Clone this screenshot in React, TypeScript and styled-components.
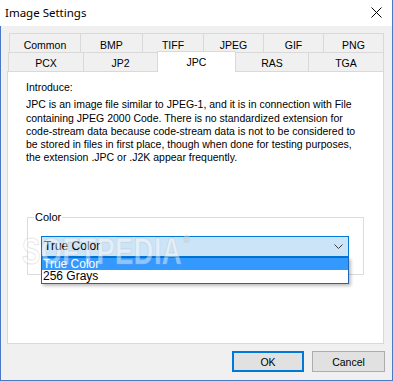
import styled, { createGlobalStyle } from "styled-components";

const GlobalStyle = createGlobalStyle`
  html, body {
    margin: 0;
    padding: 0;
    background: #ffffff;
  }
  * {
    box-sizing: border-box;
  }
`;

const ACCENT = "#4a78c4";

const topTabs = [
  { label: "Common", width: 72 },
  { label: "BMP", width: 63 },
  { label: "TIFF", width: 62 },
  { label: "JPEG", width: 61 },
  { label: "GIF", width: 61 },
  { label: "PNG", width: 61 },
];

const bottomTabs = [
  { label: "PCX", width: 76 },
  { label: "JP2", width: 75 },
  { label: "JPC", width: 79, active: true },
  { label: "RAS", width: 74 },
  { label: "TGA", width: 76 },
];

const introLines = [
  "JPC is an image file similar to JPEG-1, and it is in connection with File",
  "containing JPEG 2000 Code. There is no standardized extension for",
  "code-stream data because code-stream data is not to be considered to",
  "be stored in files in first place, though when done for testing purposes,",
  "the extension .JPC or .J2K appear frequently.",
];

const App = () => {
  return (
    <>
      <GlobalStyle />
      <Window>
        <TitleBar>
          <Title>Image Settings</Title>
          <CloseButton aria-label="Close">
            <svg width="11" height="11" viewBox="0 0 11 11" aria-hidden={true}>
              <path d="M0.5 0.5 L10.5 10.5 M10.5 0.5 L0.5 10.5" stroke="#000" strokeWidth="1" fill="none" />
            </svg>
          </CloseButton>
        </TitleBar>

        <Client>
          <TabStrip>
            <TabRow $offset={1}>
              {topTabs.map((t) => (
                <Tab key={t.label} $width={t.width} $padTop={5}>
                  {t.label}
                </Tab>
              ))}
            </TabRow>
            <TabRow $offset={0}>
              {bottomTabs.map((t) => (
                <Tab key={t.label} $width={t.width} $padTop={4} $active={t.active}>
                  {t.label}
                </Tab>
              ))}
            </TabRow>
          </TabStrip>

          <Panel>
            <IntroLabel>Introduce:</IntroLabel>
            <Description>
              {introLines.map((line) => (
                <Line key={line}>{line}</Line>
              ))}
            </Description>

            <GroupBox>
              <Legend>Color</Legend>
              <Combo>
                <ComboText>True Color</ComboText>
                <svg width="9" height="5" viewBox="0 0 9 5" aria-hidden={true}>
                  <path d="M0.5 0.5 L4.5 4.5 L8.5 0.5" stroke="#3c3c3c" strokeWidth="1" fill="none" />
                </svg>
                <DropList>
                  <Option $selected>True Color</Option>
                  <Option>256 Grays</Option>
                </DropList>
              </Combo>
            </GroupBox>

            <Watermark aria-hidden={true}>
              SOFTPEDIA<sup>®</sup>
            </Watermark>
          </Panel>

          <ButtonRow>
            <DialogButton $default>OK</DialogButton>
            <DialogButton>Cancel</DialogButton>
          </ButtonRow>
        </Client>
      </Window>
    </>
  );
};

export default App;

const Window = styled.div`
  width: 393px;
  height: 381px;
  display: flex;
  flex-direction: column;
  border-right: 1px solid ${ACCENT};
  border-bottom: 1px solid ${ACCENT};
  font-family: "Liberation Sans", Arial, sans-serif;
  color: #000;
`;

const TitleBar = styled.div`
  height: 26px;
  flex: none;
  display: flex;
  align-items: center;
  justify-content: space-between;
  padding: 0 10px 1px 5px;
  background: #ffffff;
`;

const Title = styled.span`
  font-family: "Noto Sans", "Open Sans", sans-serif;
  font-size: 11.5px;
  color: #000;
`;

const CloseButton = styled.div`
  display: inline-flex;
  width: 11px;
  height: 11px;
`;

const Client = styled.div`
  flex: 1;
  display: flex;
  flex-direction: column;
  padding-top: 7px;
  background: #f0f0f0;
  border-left: 1px solid ${ACCENT};
`;

const TabStrip = styled.div`
  margin-left: 7px;
  display: flex;
  flex-direction: column;
`;

const TabRow = styled.div<{ $offset: number }>`
  display: flex;
  height: 19px;
  margin-left: ${(p) => p.$offset}px;
`;

const Tab = styled.div<{ $width: number; $padTop: number; $active?: boolean }>`
  width: ${(p) => p.$width}px;
  height: ${(p) => (p.$active ? 21 : 19)}px;
  margin-top: ${(p) => (p.$active ? -1 : 0)}px;
  padding-top: ${(p) => p.$padTop}px;
  flex: none;
  border: 1px solid #d9d9d9;
  border-bottom: none;
  background: ${(p) => (p.$active ? "#ffffff" : "#f0f0f0")};
  position: ${(p) => (p.$active ? "relative" : "static")};
  z-index: ${(p) => (p.$active ? 2 : "auto")};
  font-size: 10.5px;
  line-height: 12px;
  text-align: center;

  & + & {
    margin-left: -1px;
  }
`;

const Panel = styled.div`
  position: relative;
  margin-left: 6px;
  width: 377px;
  height: 273px;
  flex: none;
  display: flex;
  flex-direction: column;
  padding: 9px 0 0 18px;
  background: #ffffff;
  border: 1px solid #d9d9d9;
`;

const IntroLabel = styled.div`
  font-size: 10.5px;
  line-height: 13.3px;
`;

const Description = styled.div`
  margin-top: 4px;
  font-size: 10.5px;
  line-height: 13.3px;
`;

const Line = styled.div`
  white-space: nowrap;
`;

const GroupBox = styled.div`
  position: relative;
  margin: 52px 0 0 1px;
  width: 337px;
  height: 58px;
  padding: 18px 13px 0;
  border: 1px solid #dcdcdc;
`;

const Legend = styled.span`
  position: absolute;
  top: -7px;
  left: 6px;
  padding: 0 1px;
  background: #ffffff;
  font-size: 11px;
  line-height: 13px;
`;

const Combo = styled.div`
  position: relative;
  width: 308px;
  height: 21px;
  display: flex;
  align-items: center;
  justify-content: space-between;
  padding: 0 5px 0 2px;
  background: #cce4f7;
  border: 1px solid #0078d7;
`;

const ComboText = styled.span`
  font-size: 12px;
  line-height: 14px;
`;

const DropList = styled.div`
  position: absolute;
  top: 20px;
  left: -1px;
  width: 308px;
  z-index: 3;
  display: flex;
  flex-direction: column;
  background: #ffffff;
  border: 1px solid #1e64b4;
  box-shadow: 2px 2px 3px rgba(0, 0, 0, 0.25);
`;

const Option = styled.div<{ $selected?: boolean }>`
  height: 12.5px;
  padding-left: 1px;
  font-size: 12px;
  line-height: 13px;
  color: ${(p) => (p.$selected ? "#ffffff" : "#000000")};
  background: ${(p) => (p.$selected ? "#3399ff" : "transparent")};
`;

const Watermark = styled.div`
  position: absolute;
  left: 14px;
  top: 160px;
  z-index: 5;
  transform: scaleX(0.74);
  transform-origin: left top;
  font-family: "Liberation Sans", Arial, sans-serif;
  font-weight: 700;
  font-size: 37px;
  line-height: 40px;
  letter-spacing: 0.5px;
  color: rgba(255, 255, 255, 0.45);
  -webkit-text-stroke: 1px rgba(170, 170, 170, 0.3);
  pointer-events: none;

  sup {
    font-size: 11px;
    vertical-align: top;
    line-height: 14px;
    margin-left: 2px;
  }
`;

const ButtonRow = styled.div`
  display: flex;
  justify-content: flex-end;
  gap: 8px;
  margin-top: 7px;
  padding-right: 7px;
`;

const DialogButton = styled.div<{ $default?: boolean }>`
  width: ${(p) => (p.$default ? 72 : 73)}px;
  height: 21px;
  display: flex;
  align-items: center;
  justify-content: center;
  background: #e1e1e1;
  border: ${(p) => (p.$default ? "2px solid #0078d7" : "1px solid #adadad")};
  font-size: 10.5px;
`;
